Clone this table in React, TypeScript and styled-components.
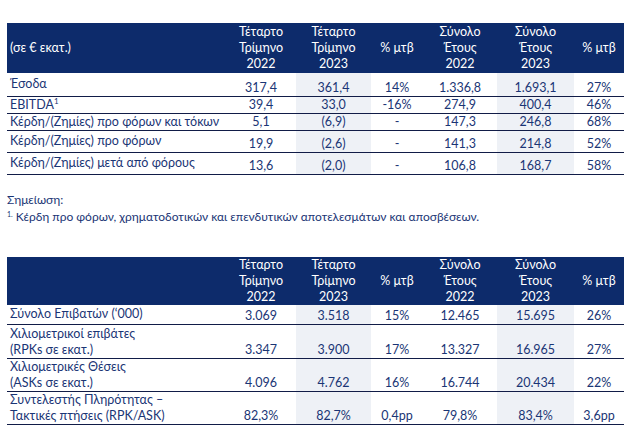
import React from 'react';
import styled, { createGlobalStyle } from 'styled-components';

const GlobalStyle = createGlobalStyle`
  html, body { margin: 0; padding: 0; background: #ffffff; }
  body { font-family: Lato, "Open Sans", sans-serif; }
`;

const NAVY = '#0d2b6b';
const TEXT = '#1a3575';
const LINE = '#111c47';
const SHADE = '#eef1f6';

const Page = styled.div`
  width: 643px;
  height: 434px;
  box-sizing: border-box;
  padding: 23px 0 0 7px;
  overflow: hidden;
`;

const Table = styled.table`
  width: 617px;
  border-collapse: collapse;
  table-layout: fixed;
  font-family: Lato, "Open Sans", sans-serif;
  font-size: 12.5px;
  color: ${TEXT};
`;

const HeadRow = styled.tr<{ $h: number }>`
  height: ${(p) => p.$h}px;
  background: ${NAVY};
`;

const HeadCell = styled.th<{ $left?: boolean }>`
  padding: 0 0 0 ${(p) => (p.$left ? '3px' : '0')};
  font-weight: 400;
  color: #ffffff;
  line-height: 16px;
  text-align: ${(p) => (p.$left ? 'left' : 'center')};
  vertical-align: middle;
`;

const BodyRow = styled.tr<{ $h: number }>`
  height: ${(p) => p.$h}px;
`;

const LabelCell = styled.td`
  padding: 0 0 0 3px;
  line-height: 16px;
  text-align: left;
  vertical-align: middle;
  white-space: nowrap;
  border-bottom: 1px solid ${LINE};
`;

const ValueCell = styled.td<{ $shade?: boolean }>`
  padding: 0;
  line-height: 16px;
  text-align: center;
  vertical-align: bottom;
  background: ${(p) => (p.$shade ? SHADE : 'transparent')};
  border-bottom: 1px solid ${LINE};
`;

const Sup = styled.sup`
  font-size: 8px;
  line-height: 0;
  vertical-align: 5px;
`;

const Notes = styled.div`
  margin: 17px 0 33px 0;
  font-family: Lato, "Open Sans", sans-serif;
  font-size: 12px;
  line-height: 15px;
  color: ${TEXT};
`;

const NoteMark = styled.span`
  font-size: 7px;
  vertical-align: 4px;
  margin-right: 3px;
`;

const widths = [219, 70, 75, 52, 74, 77, 50];
const shaded = [false, true, false, false, true, false];

const headers = [
  ['Τέταρτο', 'Τρίμηνο', '2022'],
  ['Τέταρτο', 'Τρίμηνο', '2023'],
  ['% μτβ'],
  ['Σύνολο', 'Έτους', '2022'],
  ['Σύνολο', 'Έτους', '2023'],
  ['% μτβ'],
];

type Row = { label: React.ReactNode; values: string[]; h: number };

const table1: Row[] = [
  { label: 'Έσοδα', values: ['317,4', '361,4', '14%', '1.336,8', '1.693,1', '27%'], h: 23 },
  {
    label: (
      <>
        EBITDA<Sup>1</Sup>
      </>
    ),
    values: ['39,4', '33,0', '-16%', '274,9', '400,4', '46%'],
    h: 16,
  },
  { label: 'Κέρδη/(Ζημίες) προ φόρων και τόκων', values: ['5,1', '(6,9)', '-', '147,3', '246,8', '68%'], h: 16 },
  { label: 'Κέρδη/(Ζημίες) προ φόρων', values: ['19,9', '(2,6)', '-', '141,3', '214,8', '52%'], h: 22 },
  { label: 'Κέρδη/(Ζημίες) μετά από φόρους', values: ['13,6', '(2,0)', '-', '106,8', '168,7', '58%'], h: 22 },
];

const table2: Row[] = [
  { label: 'Σύνολο Επιβατών (‘000)', values: ['3.069', '3.518', '15%', '12.465', '15.695', '26%'], h: 20 },
  {
    label: (
      <>
        Χιλιομετρικοί επιβάτες
        <br />
        (RPKs σε εκατ.)
      </>
    ),
    values: ['3.347', '3.900', '17%', '13.327', '16.965', '27%'],
    h: 34,
  },
  {
    label: (
      <>
        Χιλιομετρικές Θέσεις
        <br />
        (ASKs σε εκατ.)
      </>
    ),
    values: ['4.096', '4.762', '16%', '16.744', '20.434', '22%'],
    h: 32,
  },
  {
    label: (
      <>
        Συντελεστής Πληρότητας –
        <br />
        Τακτικές πτήσεις (RPK/ASK)
      </>
    ),
    values: ['82,3%', '82,7%', '0,4pp', '79,8%', '83,4%', '3,6pp'],
    h: 32,
  },
];

function DataTable({ title, headH, rows }: { title: string; headH: number; rows: Row[] }) {
  return (
    <Table>
      <colgroup>
        {widths.map((w, i) => (
          <col key={i} style={{ width: w }} />
        ))}
      </colgroup>
      <thead>
        <HeadRow $h={headH}>
          <HeadCell $left>{title}</HeadCell>
          {headers.map((lines, i) => (
            <HeadCell key={i}>
              {lines.map((l, j) => (
                <React.Fragment key={j}>
                  {j > 0 && <br />}
                  {l}
                </React.Fragment>
              ))}
            </HeadCell>
          ))}
        </HeadRow>
      </thead>
      <tbody>
        {rows.map((r, i) => (
          <BodyRow key={i} $h={r.h}>
            <LabelCell>{r.label}</LabelCell>
            {r.values.map((v, j) => (
              <ValueCell key={j} $shade={shaded[j]}>
                {v}
              </ValueCell>
            ))}
          </BodyRow>
        ))}
      </tbody>
    </Table>
  );
}

export default function App() {
  return (
    <>
      <GlobalStyle />
      <Page>
        <DataTable title="(σε € εκατ.)" headH={50} rows={table1} />
        <Notes>
          <div>Σημείωση:</div>
          <div>
            <NoteMark>1.</NoteMark>Κέρδη προ φόρων, χρηματοδοτικών και επενδυτικών αποτελεσμάτων και αποσβέσεων.
          </div>
        </Notes>
        <DataTable title="" headH={48} rows={table2} />
      </Page>
    </>
  );
}
